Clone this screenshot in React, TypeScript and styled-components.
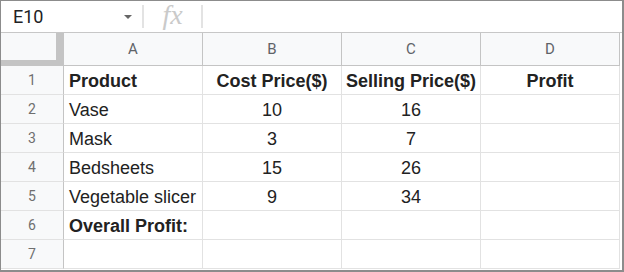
import React from 'react';
import styled, { createGlobalStyle } from 'styled-components';

// -- sheet data --
const columns = ['A', 'B', 'C', 'D'];

type Row = { cells: string[]; bold?: boolean };

const rows: Row[] = [
  { cells: ['Product', 'Cost Price($)', 'Selling Price($)', 'Profit'], bold: true },
  { cells: ['Vase', '10', '16', ''] },
  { cells: ['Mask', '3', '7', ''] },
  { cells: ['Bedsheets', '15', '26', ''] },
  { cells: ['Vegetable slicer', '9', '34', ''] },
  { cells: ['Overall Profit:', '', '', ''], bold: true },
  { cells: ['', '', '', ''] },
];

// -- main component --
const App: React.FC = () => {
  return (
    <>
      <GlobalStyle />
      <Frame>
        <FormulaBar>
          <NameBox>
            <span>E10</span>
            <DropArrow />
          </NameBox>
          <Divider />
          <FxLabel>fx</FxLabel>
          <Divider />
        </FormulaBar>
        <Sheet>
          <Corner />
          {columns.map((c) => (
            <ColHeader key={c}>{c}</ColHeader>
          ))}
          {rows.map((row, i) => (
            <React.Fragment key={i}>
              <RowHeader>{i + 1}</RowHeader>
              {row.cells.map((text, j) => (
                <Cell key={j} $bold={!!row.bold} $center={j > 0}>
                  {text}
                </Cell>
              ))}
            </React.Fragment>
          ))}
        </Sheet>
      </Frame>
    </>
  );
};

// -- styled components --

const GlobalStyle = createGlobalStyle`
  body {
    margin: 0;
    background: #fff;
  }
`;

const Frame = styled.div`
  width: 624px;
  height: 272px;
  box-sizing: border-box;
  border: 1px solid #8c8c8c;
  border-right-width: 2px;
  border-bottom-width: 2px;
  background: #fff;
  overflow: hidden;
`;

const FormulaBar = styled.div`
  display: flex;
  align-items: center;
  height: 32px;
  box-sizing: border-box;
  border-bottom: 1px solid #c7c7c7;
`;

const NameBox = styled.div`
  width: 141px;
  box-sizing: border-box;
  display: flex;
  align-items: center;
  justify-content: space-between;
  padding: 0 10px 0 12px;
  font-family: Roboto, 'Liberation Sans', sans-serif;
  font-size: 18px;
  color: #202124;
`;

const DropArrow = styled.div`
  width: 0;
  height: 0;
  border-left: 4px solid transparent;
  border-right: 4px solid transparent;
  border-top: 4px solid #666;
`;

const Divider = styled.div`
  width: 2px;
  height: 23px;
  background: #e3e3e3;
`;

const FxLabel = styled.div`
  width: 57px;
  text-align: center;
  font-family: 'Liberation Serif', serif;
  font-style: italic;
  font-size: 28px;
  color: #cacaca;
  line-height: 1;
  padding-bottom: 3px;
`;

const Sheet = styled.div`
  display: grid;
  grid-template-columns: 63px repeat(4, 139px);
  grid-template-rows: 33px repeat(7, 29px);
`;

const Corner = styled.div`
  box-sizing: border-box;
  background: #f8f9fa;
  border-right: 8px solid #c4c4c4;
  border-bottom: 6px solid #c4c4c4;
`;

const ColHeader = styled.div`
  box-sizing: border-box;
  background: #f8f9fa;
  border-right: 1px solid #c4c4c4;
  border-bottom: 1px solid #c4c4c4;
  display: flex;
  align-items: center;
  justify-content: center;
  font-family: Roboto, 'Liberation Sans', sans-serif;
  font-size: 15px;
  color: #5f6368;
`;

const RowHeader = styled.div`
  box-sizing: border-box;
  background: #f8f9fa;
  border-right: 1px solid #c4c4c4;
  border-bottom: 1px solid #e2e2e2;
  display: flex;
  align-items: center;
  justify-content: center;
  font-family: Roboto, 'Liberation Sans', sans-serif;
  font-size: 14px;
  color: #6f6f6f;
`;

const Cell = styled.div<{ $bold: boolean; $center: boolean }>`
  box-sizing: border-box;
  border-right: 1px solid #e2e2e2;
  border-bottom: 1px solid #e2e2e2;
  display: flex;
  align-items: center;
  justify-content: ${(p) => (p.$center ? 'center' : 'flex-start')};
  padding: 3px 5px 0;
  font-family: 'Liberation Sans', Arial, sans-serif;
  font-size: 18px;
  font-weight: ${(p) => (p.$bold ? 700 : 400)};
  color: #222;
  white-space: nowrap;
`;

export default App;
